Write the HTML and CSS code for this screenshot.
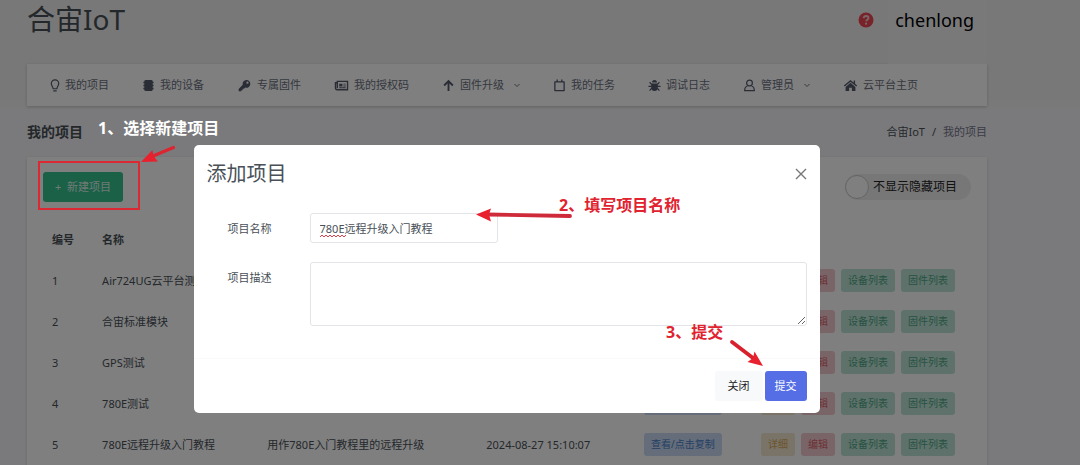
FILE: index.html
```html
<!DOCTYPE html>
<html lang="zh-CN">
<head>
    <meta charset="UTF-8">
    <meta name="viewport" content="width=device-width, initial-scale=1.0">
    <title>合宙IoT</title>
    <link rel="stylesheet" href="styles.css">
</head>
<body>
    <div class="page">
        <header class="header">
            <h1 class="logo">合宙IoT</h1>
            <div class="header-right">
                <a href="#" class="help" aria-label="帮助">
                    <svg viewBox="0 0 16 16" width="16" height="16"><circle cx="8" cy="8" r="7.5" fill="#f04652"/><path d="M5.6 6.2c.2-1.5 1.200-2.200 2.500-2.200 1.300 0 2.400.8 2.400 2.100 0 1.600-2.300 1.700-2.300 3.200" fill="none" stroke="#f3d0d3" stroke-width="1.800"/><circle cx="8.100" cy="11.700" r="1.100" fill="#f3d0d3"/></svg>
                </a>
                <button type="button" class="user">chenlong</button>
            </div>
        </header>

        <nav class="nav">
            <a href="#"><svg class="icon icon-s" viewBox="0 0 10 14"><path d="M3 10.500C3 8.500 1 7.500 1 4.900a4 4 0 0 1 8 0C9 7.500 7 8.500 7 10.500zM3.200 12.800h3.600" fill="none" stroke="currentColor" stroke-width="1.300"/></svg>我的项目</a>
            <a href="#"><svg class="icon" viewBox="0 0 13 14"><path d="M3.500 1h6A1.500 1.500 0 0 1 11 2.500v9A1.500 1.500 0 0 1 9.500 13h-6A1.500 1.500 0 0 1 2 11.500v-9A1.500 1.500 0 0 1 3.500 1zM1 3h11v1.500H1zM1 6.200h11v1.500H1zM1 9.500h11V11H1z" fill="currentColor"/></svg>我的设备</a>
            <a href="#"><svg class="icon icon-l" viewBox="0 0 14 14"><path fill-rule="evenodd" d="M9 1a4.200 4.200 0 1 1-1.200 8.200L6.500 10.500H5V12H3.500v1.300H.7v-2.600L5.100 6.300A4.200 4.200 0 0 1 9 1zm1.200 1.800a1.200 1.200 0 1 0 0 2.400 1.200 1.200 0 0 0 0-2.400z" fill="currentColor"/></svg>专属固件</a>
            <a href="#"><svg class="icon icon-l" viewBox="0 0 15 14"><path d="M3 2.500h11v9H2.500c-1 0-1.500-.6-1.500-1.500V4h2zM3 4v6" fill="none" stroke="currentColor" stroke-width="1.500"/><path d="M5 5h3.500v3H5zM9.500 5H12v1H9.500zM9.500 7H12v1H9.500zM5 9h7v1H5z" fill="currentColor"/></svg>我的授权码</a>
            <a href="#"><svg class="icon" viewBox="0 0 13 14"><path d="M6.500 13V2.500M1.800 7l4.700-4.700L11.200 7" fill="none" stroke="currentColor" stroke-width="2"/></svg>固件升级<svg class="chevron" viewBox="0 0 6 6"><path d="M.5 2L3 4.500 5.500 2" fill="none" stroke="currentColor"/></svg></a>
            <a href="#"><svg class="icon" viewBox="0 0 13 14"><path d="M1.500 3.200h10v9.300h-10zM4 .5v2.500M9 .5v2.500" fill="none" stroke="currentColor" stroke-width="1.400" stroke-linejoin="round"/></svg>我的任务</a>
            <a href="#"><svg class="icon" viewBox="0 0 13 14"><path d="M3.800 3.800a2.700 2.700 0 0 1 5.400 0zM3 4.800h7v4.700a3.500 3.500 0 0 1-7 0z" fill="currentColor"/><path d="M3.500 6L1.200 3.500M9.500 6l2.300-2.500M0 8h13M3.500 9.800l-2.300 2.700M9.500 9.800l2.300 2.700" fill="none" stroke="currentColor" stroke-width="1.300"/></svg>调试日志</a>
            <a href="#"><svg class="icon" viewBox="0 0 13 14"><circle cx="6.500" cy="4.300" r="3.100" fill="none" stroke="currentColor" stroke-width="1.300"/><path d="M4.300 7.500C2.500 8 1.300 9.500 1.300 12.500h10.400c0-3-1.200-4.500-3-5" fill="none" stroke="currentColor" stroke-width="1.300"/></svg>管理员<svg class="chevron" viewBox="0 0 6 6"><path d="M.5 2L3 4.500 5.500 2" fill="none" stroke="currentColor"/></svg></a>
            <a href="#"><svg class="icon icon-l" viewBox="0 0 15 14"><path d="M7.500 4L12.800 8.500V13H9V9.500H6V13H2.200V8.500z" fill="currentColor"/><path d="M.8 7.500l6.700-5.500 6.700 5.500M11.700 1.500v4" fill="none" stroke="currentColor" stroke-width="1.500"/></svg>云平台主页</a>
        </nav>

        <div class="title-row">
            <h2>我的项目</h2>
            <div class="breadcrumb"><a href="#">合宙IoT</a><span>/</span><span class="current">我的项目</span></div>
        </div>

        <main class="card">
            <div class="toolbar">
                <button type="button" class="btn-new">+&nbsp; 新建项目</button>
                <label class="switch"><input type="checkbox">不显示隐藏项目</label>
            </div>
            <table class="projects">
                <thead>
                    <tr><th class="col-id">编号</th><th class="col-name">名称</th><th class="col-desc"></th><th class="col-time"></th><th class="col-key"></th><th></th></tr>
                </thead>
                <tbody>
                    <tr>
                        <td>1</td><td>Air724UG云平台测试</td><td></td><td></td>
                        <td><button type="button" class="tag blue">查看/点击复制</button></td>
                        <td><div class="actions"><button type="button" class="tag yellow">详细</button><button type="button" class="tag red">编辑</button><button type="button" class="tag green">设备列表</button><button type="button" class="tag green">固件列表</button></div></td>
                    </tr>
                    <tr>
                        <td>2</td><td>合宙标准模块</td><td></td><td></td>
                        <td><button type="button" class="tag blue">查看/点击复制</button></td>
                        <td><div class="actions"><button type="button" class="tag yellow">详细</button><button type="button" class="tag red">编辑</button><button type="button" class="tag green">设备列表</button><button type="button" class="tag green">固件列表</button></div></td>
                    </tr>
                    <tr>
                        <td>3</td><td>GPS测试</td><td></td><td></td>
                        <td><button type="button" class="tag blue">查看/点击复制</button></td>
                        <td><div class="actions"><button type="button" class="tag yellow">详细</button><button type="button" class="tag red">编辑</button><button type="button" class="tag green">设备列表</button><button type="button" class="tag green">固件列表</button></div></td>
                    </tr>
                    <tr>
                        <td>4</td><td>780E测试</td><td></td><td></td>
                        <td><button type="button" class="tag blue">查看/点击复制</button></td>
                        <td><div class="actions"><button type="button" class="tag yellow">详细</button><button type="button" class="tag red">编辑</button><button type="button" class="tag green">设备列表</button><button type="button" class="tag green">固件列表</button></div></td>
                    </tr>
                    <tr>
                        <td>5</td><td>780E远程升级入门教程</td><td>用作780E入门教程里的远程升级</td><td>2024-08-27 15:10:07</td>
                        <td><button type="button" class="tag blue">查看/点击复制</button></td>
                        <td><div class="actions"><button type="button" class="tag yellow">详细</button><button type="button" class="tag red">编辑</button><button type="button" class="tag green">设备列表</button><button type="button" class="tag green">固件列表</button></div></td>
                    </tr>
                </tbody>
            </table>
        </main>
    </div>

    <!-- 添加项目弹窗 -->
    <div class="overlay">
        <form class="modal" role="dialog" aria-labelledby="modal-title">
            <div class="modal-header">
                <h3 id="modal-title">添加项目</h3>
                <button type="button" class="close" aria-label="关闭">
                    <svg viewBox="0 0 12 12" width="12" height="12"><path d="M1 1l10 10M11 1L1 11" stroke="#777" stroke-width="1.400"/></svg>
                </button>
            </div>
            <div class="modal-body">
                <label for="name">项目名称</label>
                <div class="field">
                    <input id="name" type="text" value="780E远程升级入门教程" spellcheck="false">
                    <svg class="squiggle" viewBox="0 0 26 4" width="26" height="4"><path d="M0 3l2-2 2 2 2-2 2 2 2-2 2 2 2-2 2 2 2-2 2 2 2-2 2 2 2-2" fill="none" stroke="#e0404a"/></svg>
                </div>
                <label for="desc">项目描述</label>
                <textarea id="desc"></textarea>
            </div>
            <div class="modal-footer">
                <button type="button" class="btn-light">关闭</button>
                <button type="submit" class="btn-primary">提交</button>
            </div>
        </form>
    </div>

    <!-- 操作步骤标注 -->
    <div class="notes">
        <div class="box"></div>
        <span class="note note-1">1、选择新建项目</span>
        <span class="note note-2">2、填写项目名称</span>
        <span class="note note-3">3、提交</span>
        <svg class="arrows" width="1080" height="465" viewBox="0 0 1080 465">
            <path d="M173.500 147.500L153 156" stroke="#dc2531" stroke-width="3.200" stroke-linecap="round"/>
            <path d="M141 162l11.500-12 .8 5.500 4.500 6z" fill="#e9202d"/>
            <path d="M570 216L488 214.500" stroke="#cf2a39" stroke-width="3.800" stroke-linecap="round"/>
            <path d="M476 214.500l15-6-2 6 2 7z" fill="#e9202d"/>
            <path d="M732 342l21 16" stroke="#d9202d" stroke-width="3.800" stroke-linecap="round"/>
            <path d="M763 366l-15.500-4 5.500-4 1.500-6.500z" fill="#e9202d"/>
        </svg>
    </div>
</body>
</html>
```
FILE: styles.css
```css
* {
    box-sizing: border-box;
    margin: 0;
    padding: 0;
}

body {
    height: 100vh;
    overflow: hidden;
    position: relative;
    font-family: "Noto Sans", "Noto Sans CJK SC", sans-serif;
    font-size: 11px;
    line-height: 16px;
    color: #495057;
    background: linear-gradient(#f0f0f0 96px, #f5f5f8 112px);
}

button, input, textarea {
    font: inherit;
    color: inherit;
    border: 0;
}

a {
    color: inherit;
    text-decoration: none;
}

.page {
    padding: 0 93px 0 27px;
}

.header {
    height: 64px;
    display: flex;
    justify-content: space-between;
}

.logo {
    font-size: 28px;
    font-weight: 400;
    line-height: 38px;
}

.header-right {
    display: flex;
}

.help {
    padding: 12px 14px 0 0;
}

.user {
    padding: 0 13px 24px 7px;
    font-size: 18px;
    color: #000;
    background: #f3f3f5;
}

.nav {
    height: 42px;
    padding: 0 23px;
    display: flex;
    align-items: center;
    gap: 33px;
    background: #fff;
    box-shadow: 0 1px 3px rgba(0, 0, 0, 0.2);
    color: #6a7080;
}

.nav a {
    display: flex;
    align-items: center;
    white-space: nowrap;
}

.icon {
    width: 13px;
    height: 13px;
    margin-right: 5px;
    color: #545a6d;
}

.icon-s {
    width: 10px;
}

.icon-l {
    width: 15px;
}

.chevron {
    width: 6px;
    height: 6px;
    margin-left: 10px;
}

.title-row {
    height: 51px;
    display: flex;
    align-items: center;
    justify-content: space-between;
}

.title-row h2 {
    font-size: 14px;
}

.breadcrumb {
    display: flex;
    gap: 7px;
}

.current {
    color: #74788d;
}

.card {
    padding: 15px 16px;
    background: #fff;
    box-shadow: 0 1px 3px rgba(0, 0, 0, 0.15);
}

.toolbar {
    display: flex;
    align-items: center;
    justify-content: space-between;
    margin-bottom: 17px;
}

.btn-new {
    width: 80px;
    height: 30px;
    border-radius: 3px;
    background: #34c38f;
    color: #dff3ea;
}

.switch {
    height: 26px;
    padding-right: 14px;
    display: flex;
    align-items: center;
    gap: 4px;
    border-radius: 13px;
    background: #efefef;
    font-size: 12px;
    color: #222;
}

.switch input {
    appearance: none;
    width: 24px;
    height: 24px;
    border: 1px solid #c8c8c8;
    border-radius: 50%;
    background: #fff;
}

.projects {
    width: 100%;
    table-layout: fixed;
    border-collapse: collapse;
}

.projects tr {
    height: 41px;
}

.projects th,
.projects td {
    padding: 0 0 0 9px;
    text-align: left;
    white-space: nowrap;
}

.col-id { width: 5.4%; }
.col-name { width: 17.8%; }
.col-desc { width: 23.6%; }
.col-time { width: 17%; }
.col-key { width: 12.6%; }

.actions {
    display: flex;
    gap: 6px;
}

.tag {
    height: 23px;
    padding: 0 7px;
    border-radius: 3px;
    font-size: 10px;
    line-height: 23px;
}

.blue {
    background: #c8daf2;
    color: #4a80cc;
}

.yellow {
    background: #f2e6d0;
    color: #d9ab58;
}

.red {
    background: #f2cbce;
    color: #d9606c;
}

.green {
    background: #bde4d6;
    color: #4fa586;
}

.overlay {
    position: absolute;
    inset: 0;
    padding: 145px 67px 0 0;
    background: rgba(0, 0, 0, 0.5);
}

.modal {
    width: 90%;
    max-width: 626px;
    margin: 0 auto;
    border-radius: 5px;
    background: #fff;
}

.modal-header {
    height: 58px;
    padding: 0 13px;
    display: flex;
    align-items: center;
    justify-content: space-between;
}

.modal-header h3 {
    font-size: 20px;
    font-weight: 400;
    line-height: 28px;
}

.close {
    display: flex;
    background: none;
}

.modal-body {
    padding: 10px 13px 32px 34px;
    display: grid;
    grid-template-columns: 82px 1fr;
    row-gap: 19px;
    border-bottom: 1px solid #fafafb;
}

.modal-body label {
    padding-top: 8px;
}

.field {
    position: relative;
}

.modal-body input,
.modal-body textarea {
    display: block;
    border: 1px solid #e2e4e8;
    border-radius: 3px;
    background: #fff;
}

.modal-body input {
    width: 38%;
    height: 30px;
    padding: 0 9px;
}

.modal-body textarea {
    width: 100%;
    height: 64px;
    padding: 6px 9px;
}

.squiggle {
    position: absolute;
    left: 10px;
    top: 21px;
}

.modal-footer {
    padding: 12px 13px;
    display: flex;
    justify-content: flex-end;
    gap: 2px;
}

.btn-light,
.btn-primary {
    height: 30px;
    padding: 0 10px;
    border-radius: 3px;
}

.btn-light {
    padding: 0 13px;
    background: #f8f9fb;
    color: #222;
}

.btn-primary {
    background: #556ee6;
    color: #fff;
}

.notes {
    position: absolute;
    inset: 0;
    pointer-events: none;
}

.arrows {
    position: absolute;
    left: 0;
    top: 0;
}

.box {
    position: absolute;
    left: 38px;
    top: 161px;
    width: 102px;
    height: 49px;
    border: 2px solid #dc2833;
}

.note {
    position: absolute;
    font-size: 16px;
    font-weight: 700;
    line-height: 18px;
    color: #e0232f;
}

.note-1 {
    left: 98px;
    top: 119px;
    color: #fff;
}

.note-2 {
    left: 559px;
    top: 196px;
}

.note-3 {
    left: 666px;
    top: 323px;
}
```
